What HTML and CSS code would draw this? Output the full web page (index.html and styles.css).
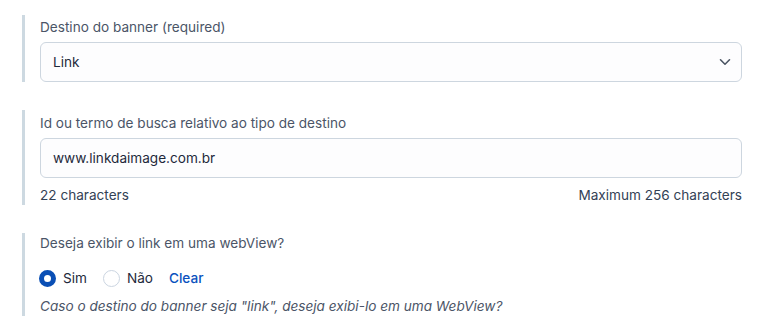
FILE: index.html
```html
<!DOCTYPE html>
<html lang="pt">
<head>
<meta charset="utf-8">
<link rel="stylesheet" href="styles.css">
</head>
<body>
<div class="form">
  <div class="field field-select">
    <label class="label">Destino do banner (required)</label>
    <div class="control select">
      <span class="value">Link</span>
      <svg class="chevron" width="12" height="8" viewBox="0 0 12 8"><path d="M1.5 1.8 L6 6.2 L10.5 1.8" fill="none" stroke="#4b5563" stroke-width="1.6" stroke-linecap="round" stroke-linejoin="round"/></svg>
    </div>
  </div>
  <div class="field field-text">
    <label class="label">Id ou termo de busca relativo ao tipo de destino</label>
    <div class="control input"><span class="value">www.linkdaimage.com.br</span></div>
    <div class="counter"><span>22 characters</span><span>Maximum 256 characters</span></div>
  </div>
  <div class="field field-radio">
    <label class="label">Deseja exibir o link em uma webView?</label>
    <div class="radios">
      <span class="radio checked"></span><span class="rlabel">Sim</span>
      <span class="radio"></span><span class="rlabel">Não</span>
      <a class="clear">Clear</a>
    </div>
    <div class="help">Caso o destino do banner seja "link", deseja exibi-lo em uma WebView?</div>
  </div>
</div>
</body>
</html>
```
FILE: styles.css
```css
html, body { margin: 0; padding: 0; background: #fff; }
body { font-family: Inter, "Noto Sans", sans-serif; font-size: 13.6px; color: #1e293b; }
.form { padding: 15px 36px 0 22px; display: flex; flex-direction: column; gap: 28px; }
.field { border-left: 3px solid #cdd9e1; padding-left: 15px; display: flex; flex-direction: column; }
.label { color: #4b5567; font-size: 13.6px; line-height: 20px; margin-top: 2px; margin-bottom: 5px; display: block; }
.control { height: 38px; border: 1px solid #cdd6df; border-radius: 6px; background: #fdfdfe; display: flex; align-items: center; padding: 0 12px; box-sizing: content-box; }
.value { color: #1e293b; font-size: 13.6px; }
.select { justify-content: space-between; padding-right: 10px; }
.chevron { display: block; }
.field-text .label { margin-top: 3px; }
.counter { display: flex; justify-content: space-between; color: #334155; font-size: 13.6px; line-height: 20px; margin-top: 7px; }
.field-radio .label { margin-top: 0; }
.radios { display: flex; align-items: center; height: 20px; margin-top: 10px; margin-left: -1px; }
.radio { width: 17px; height: 17px; border-radius: 50%; border: 1.5px solid #cbd5e1; box-sizing: border-box; background: #fff; margin-right: 7px; }
.radio.checked { border: 5.5px solid #0a4fb5; }
.rlabel { color: #1e293b; margin-right: 16px; }
.clear { color: #0a52be; font-weight: 500; }
.help { color: #4b5567; font-style: italic; line-height: 20px; margin-top: 8px; margin-bottom: 0; }
```
